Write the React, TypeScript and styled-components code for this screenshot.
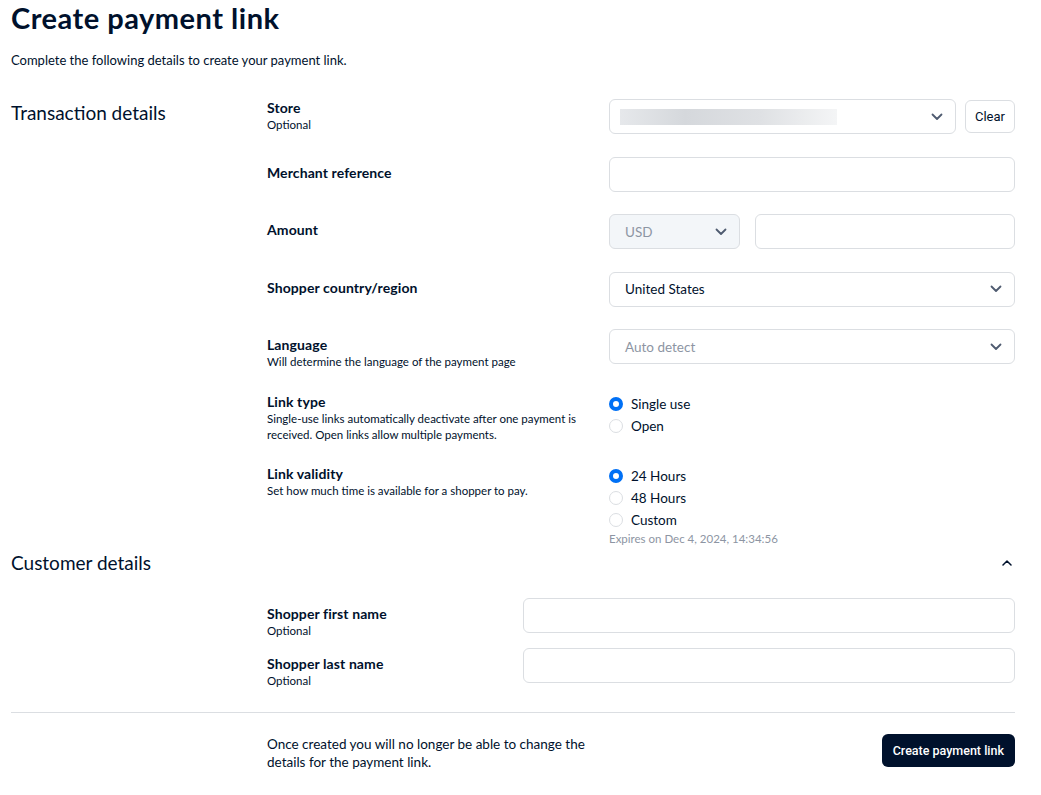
import React from "react";
import styled, { createGlobalStyle } from "styled-components";

const GlobalStyle = createGlobalStyle`
  html, body {
    margin: 0;
    padding: 0;
    background: #ffffff;
  }
  body {
    font-family: Lato, "Liberation Sans", Arial, sans-serif;
    color: #00112c;
    -webkit-font-smoothing: antialiased;
  }
`;

const Page = styled.div`
  width: 1004px;
  padding: 0 26px 24px 11px;
`;

const Header = styled.header`
  display: flex;
  flex-direction: column;
`;

const Title = styled.h1`
  margin: 0;
  font-size: 29px;
  line-height: 36px;
  font-weight: 700;
  letter-spacing: 0.5px;
`;

const Subtitle = styled.p`
  margin: 15px 0 0;
  font-size: 13px;
  line-height: 18px;
`;

const TransactionSection = styled.section`
  display: grid;
  grid-template-columns: 256px 1fr;
  margin-top: 30px;
`;

const SectionTitle = styled.h2`
  margin: 2px 0 0;
  font-size: 19px;
  line-height: 24px;
  font-weight: 400;
`;

const Fields = styled.div<{ $gap: number }>`
  display: flex;
  flex-direction: column;
  gap: ${(p) => p.$gap}px;
`;

const Row = styled.div<{ $labelWidth: number }>`
  display: grid;
  grid-template-columns: ${(p) => p.$labelWidth}px 1fr;
  align-items: start;
`;

const LabelBlock = styled.div<{ $offset: number }>`
  display: flex;
  flex-direction: column;
  padding-top: ${(p) => p.$offset}px;
`;

const Label = styled.span`
  font-size: 14px;
  line-height: 18px;
  font-weight: 700;
  letter-spacing: 0.1px;
`;

const Hint = styled.span`
  font-size: 11.5px;
  line-height: 16px;
  max-width: 322px;
`;

const ControlRow = styled.div<{ $gap: number }>`
  display: flex;
  align-items: center;
  gap: ${(p) => p.$gap}px;
`;

const Field = styled.div<{ $width?: number; $disabled?: boolean }>`
  box-sizing: border-box;
  display: flex;
  align-items: center;
  justify-content: space-between;
  height: 35px;
  padding: 0 12px 0 15px;
  border: 1px solid #dbdee2;
  border-radius: 6px;
  background: ${(p) => (p.$disabled ? "#f3f6f9" : "#ffffff")};
  ${(p) => (p.$width ? `width: ${p.$width}px; flex: none;` : "flex: 1;")}
  font-size: 13.5px;
`;

const Value = styled.span<{ $muted?: boolean }>`
  color: ${(p) => (p.$muted ? "#8d95a3" : "#00112c")};
`;

const Skeleton = styled.span`
  display: block;
  width: 217px;
  height: 16px;
  margin-left: -5px;
  background: linear-gradient(
    90deg,
    #e6e8eb 0%,
    #d5d8dc 30%,
    #dfe1e4 65%,
    #f4f5f6 100%
  );
`;

const GhostButton = styled.button`
  box-sizing: border-box;
  height: 33px;
  width: 50px;
  padding: 0;
  border: 1px solid #dbdee2;
  border-radius: 6px;
  background: #ffffff;
  font-family: Roboto, "Liberation Sans", Arial, sans-serif;
  font-size: 13px;
  color: #00112c;
`;

const RadioList = styled.div`
  display: flex;
  flex-direction: column;
`;

const RadioItem = styled.label`
  display: flex;
  align-items: center;
  gap: 8px;
  height: 22px;
  font-size: 13.5px;
`;

const RadioDot = styled.span<{ $checked?: boolean }>`
  box-sizing: border-box;
  width: 14px;
  height: 14px;
  border-radius: 50%;
  flex: none;
  border: ${(p) => (p.$checked ? "4px solid #0070f5" : "1px solid #dbdee2")};
  background: #ffffff;
`;

const Expires = styled.span`
  font-size: 11.5px;
  line-height: 16px;
  color: #8d95a3;
`;

const CustomerSection = styled.section`
  display: flex;
  flex-direction: column;
  margin-top: 4px;
`;

const SectionHeader = styled.div`
  display: flex;
  align-items: center;
  justify-content: space-between;
  height: 24px;
  padding-right: 3px;
  margin-bottom: 23px;
`;

const CustomerTitle = styled(SectionTitle)`
  margin: 0;
`;

const CustomerFields = styled(Fields)`
  padding-left: 256px;
`;

const Divider = styled.hr`
  margin: 23px 0 0;
  border: none;
  border-top: 1px solid #dbdee2;
`;

const Footer = styled.footer`
  display: flex;
  align-items: flex-start;
  justify-content: space-between;
  padding: 21px 0 0 256px;
`;

const FooterText = styled.p`
  margin: 1px 0 0;
  max-width: 322px;
  font-size: 13.5px;
  line-height: 18px;
`;

const PrimaryButton = styled.button`
  height: 33px;
  padding: 0 11px;
  border: none;
  border-radius: 6px;
  background: #00112c;
  color: #ffffff;
  font-family: Roboto, "Liberation Sans", Arial, sans-serif;
  font-size: 12.5px;
  font-weight: 500;
`;

const ChevronDown = () => (
  <svg width="12" height="8" viewBox="0 0 12 8" fill="none">
    <path
      d="M1.5 1.5 L6 6 L10.5 1.5"
      stroke="#4f5b70"
      strokeWidth="1.8"
      strokeLinecap="round"
      strokeLinejoin="round"
    />
  </svg>
);

const ChevronUp = () => (
  <svg width="10" height="6" viewBox="0 0 10 6" fill="none">
    <path
      d="M1 5 L5 1 L9 5"
      stroke="#00112c"
      strokeWidth="1.5"
      strokeLinecap="round"
      strokeLinejoin="round"
    />
  </svg>
);

type Radio = { label: string; checked?: boolean };

const Radios = ({ items }: { items: Radio[] }) => (
  <>
    {items.map((r) => (
      <RadioItem key={r.label}>
        <RadioDot $checked={r.checked} />
        {r.label}
      </RadioItem>
    ))}
  </>
);

export default function App() {
  return (
    <Page>
      <GlobalStyle />
      <Header>
        <Title>Create payment link</Title>
        <Subtitle>Complete the following details to create your payment link.</Subtitle>
      </Header>

      <TransactionSection>
        <SectionTitle>Transaction details</SectionTitle>
        <Fields $gap={22.5}>
          <Row $labelWidth={342}>
            <LabelBlock $offset={0}>
              <Label>Store</Label>
              <Hint>Optional</Hint>
            </LabelBlock>
            <ControlRow $gap={9}>
              <Field>
                <Skeleton />
                <ChevronDown />
              </Field>
              <GhostButton>Clear</GhostButton>
            </ControlRow>
          </Row>

          <Row $labelWidth={342}>
            <LabelBlock $offset={7}>
              <Label>Merchant reference</Label>
            </LabelBlock>
            <Field />
          </Row>

          <Row $labelWidth={342}>
            <LabelBlock $offset={7}>
              <Label>Amount</Label>
            </LabelBlock>
            <ControlRow $gap={15}>
              <Field $width={131} $disabled>
                <Value $muted>USD</Value>
                <ChevronDown />
              </Field>
              <Field />
            </ControlRow>
          </Row>

          <Row $labelWidth={342}>
            <LabelBlock $offset={7}>
              <Label>Shopper country/region</Label>
            </LabelBlock>
            <Field>
              <Value>United States</Value>
              <ChevronDown />
            </Field>
          </Row>

          <Row $labelWidth={342}>
            <LabelBlock $offset={7}>
              <Label>Language</Label>
              <Hint>Will determine the language of the payment page</Hint>
            </LabelBlock>
            <Field>
              <Value $muted>Auto detect</Value>
              <ChevronDown />
            </Field>
          </Row>

          <Row $labelWidth={342}>
            <LabelBlock $offset={0}>
              <Label>Link type</Label>
              <Hint>
                Single-use links automatically deactivate after one payment is received. Open
                links allow multiple payments.
              </Hint>
            </LabelBlock>
            <RadioList>
              <Radios items={[{ label: "Single use", checked: true }, { label: "Open" }]} />
            </RadioList>
          </Row>

          <Row $labelWidth={342}>
            <LabelBlock $offset={0}>
              <Label>Link validity</Label>
              <Hint>Set how much time is available for a shopper to pay.</Hint>
            </LabelBlock>
            <RadioList>
              <Radios
                items={[
                  { label: "24 Hours", checked: true },
                  { label: "48 Hours" },
                  { label: "Custom" },
                ]}
              />
              <Expires>Expires on Dec 4, 2024, 14:34:56</Expires>
            </RadioList>
          </Row>
        </Fields>
      </TransactionSection>

      <CustomerSection>
        <SectionHeader>
          <CustomerTitle>Customer details</CustomerTitle>
          <ChevronUp />
        </SectionHeader>
        <CustomerFields $gap={9}>
          <Row $labelWidth={256}>
            <LabelBlock $offset={7}>
              <Label>Shopper first name</Label>
              <Hint>Optional</Hint>
            </LabelBlock>
            <Field />
          </Row>
          <Row $labelWidth={256}>
            <LabelBlock $offset={7}>
              <Label>Shopper last name</Label>
              <Hint>Optional</Hint>
            </LabelBlock>
            <Field />
          </Row>
        </CustomerFields>
      </CustomerSection>

      <Divider />
      <Footer>
        <FooterText>
          Once created you will no longer be able to change the details for the payment link.
        </FooterText>
        <PrimaryButton>Create payment link</PrimaryButton>
      </Footer>
    </Page>
  );
}
